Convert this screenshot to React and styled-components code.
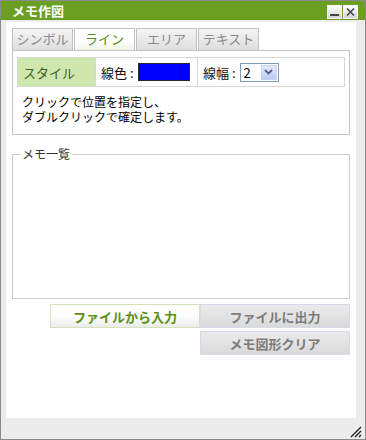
import React from "react";
import styled, { createGlobalStyle } from "styled-components";

const Global = createGlobalStyle`
  html, body { margin: 0; padding: 0; background: #ffffff; }
  body { font-family: "Noto Sans CJK JP", "Noto Sans", sans-serif; }
  * { box-sizing: border-box; }
`;

const Window = styled.div`
  width: 366px;
  height: 440px;
  border: 1px solid #8a8a8a;
  background: #ececec;
  display: flex;
  flex-direction: column;
`;

const TitleBar = styled.div`
  height: 19px;
  background: #6b9f22;
  display: flex;
  align-items: center;
  padding: 0 7px 0 11px;
`;

const Title = styled.div`
  flex: 1;
  color: #ffffff;
  font-size: 13px;
  font-weight: bold;
  line-height: 19px;
`;

const WinButtons = styled.div`
  display: flex;
  gap: 1px;
  margin-top: 3px;
`;

const WinButton = styled.div`
  width: 15px;
  height: 14px;
  border: 1px solid #f4f4f4;
  background: linear-gradient(#ffffff, #d4d4d4);
  display: flex;
  align-items: center;
  justify-content: center;
`;

const Body = styled.div`
  flex: 1;
  margin: 2px 9px 0 5px;
  background: #ffffff;
  padding: 6px 6px 0 6px;
  display: flex;
  flex-direction: column;
`;

const Tabs = styled.div`
  display: flex;
  gap: 1px;
  height: 22px;
`;

const Tab = styled.div`
  width: 61px;
  height: 22px;
  border: 1px solid #c2c2c2;
  border-bottom: none;
  background: ${(p) =>
    p.$active
      ? "linear-gradient(#ffffff 0%, #ffffff 60%, #eef5e4 100%)"
      : "linear-gradient(#f4f4f4, #dedede)"};
  color: ${(p) => (p.$active ? "#5b8c1c" : "#8a8a8a")};
  font-size: 13px;
  line-height: 20px;
  text-align: center;
`;

const Panel = styled.div`
  border: 1px solid #c4c4c4;
  height: 85px;
  padding: 6px 4px 0 4px;
`;

const StyleTable = styled.div`
  display: grid;
  grid-template-columns: 77px 102px 1fr;
  height: 30px;
  border: 1px solid #d6d6d6;
`;

const Cell = styled.div`
  display: flex;
  align-items: center;
  padding-left: 5px;
  font-size: 13px;
  color: ${(p) => (p.$head ? "#3f5f22" : "#111111")};
  background: ${(p) => (p.$head ? "#cfe7ae" : "#ffffff")};
  border-left: ${(p) => (p.$first ? "none" : "1px solid #d6d6d6")};
`;

const Label = styled.span`
  margin-right: 4px;
`;

const Swatch = styled.div`
  width: 52px;
  height: 18px;
  background: #0000ff;
  border: 1px solid #2a2a2a;
`;

const Select = styled.div`
  width: 39px;
  height: 19px;
  border: 1px solid #7f9db9;
  display: flex;
  align-items: center;
  justify-content: space-between;
  padding: 1px;
  font-size: 13px;
  color: #000;
`;

const SelectValue = styled.span`
  padding-left: 2px;
  line-height: 15px;
`;

const Arrow = styled.div`
  width: 16px;
  height: 15px;
  background: linear-gradient(#e3ebfd, #b8cbf3);
  border: 1px solid #c5d4f3;
  display: flex;
  align-items: center;
  justify-content: center;
`;

const Note = styled.div`
  padding: 7px 0 0 5px;
`;

const NoteLine = styled.div`
  height: 15px;
  font-size: 12px;
  line-height: 15px;
  color: #000;
  white-space: nowrap;
`;

const Fieldset = styled.fieldset`
  margin: 12px 0 0 0;
  padding: 0;
  height: 152px;
  border: 1px solid #cccccc;
  border-radius: 0;
`;

const Legend = styled.legend`
  margin-left: 7px;
  padding: 0 2px;
  font-size: 12px;
  color: #333;
  line-height: 14px;
`;

const ButtonGrid = styled.div`
  margin-top: 5px;
  display: grid;
  grid-template-columns: 150px 150px;
  justify-content: end;
  row-gap: 3px;
`;

const Button = styled.div`
  grid-column: ${(p) => p.$col};
  height: 24px;
  display: flex;
  align-items: center;
  justify-content: center;
  font-size: 13px;
  font-weight: bold;
  border: 1px solid ${(p) => (p.$primary ? "#d2e3b9" : "#d6dbe8")};
  background: ${(p) =>
    p.$primary
      ? "linear-gradient(#ffffff 0%, #ffffff 45%, #ececec 100%)"
      : "linear-gradient(#e9e9e9 0%, #e3e3e3 50%, #d9d9d9 100%)"};
  color: ${(p) => (p.$primary ? "#5b8f18" : "#7c7c7c")};
`;

const Footer = styled.div`
  height: 21px;
  display: flex;
  justify-content: flex-end;
  align-items: flex-end;
  padding: 0 3px 1px 0;
`;

export default function App() {
  return (
    <>
      <Global />
      <Window>
        <TitleBar>
          <Title>メモ作図</Title>
          <WinButtons>
            <WinButton>
              <svg width="11" height="10" viewBox="0 0 11 10">
                <rect x="1" y="7" width="9" height="2" fill="#444" />
              </svg>
            </WinButton>
            <WinButton>
              <svg width="11" height="10" viewBox="0 0 11 10">
                <path d="M2 1.5 L9 8.5 M9 1.5 L2 8.5" stroke="#444" strokeWidth="1.6" />
              </svg>
            </WinButton>
          </WinButtons>
        </TitleBar>
        <Body>
          <Tabs>
            <Tab>シンボル</Tab>
            <Tab $active>ライン</Tab>
            <Tab>エリア</Tab>
            <Tab>テキスト</Tab>
          </Tabs>
          <Panel>
            <StyleTable>
              <Cell $head $first>スタイル</Cell>
              <Cell>
                <Label>線色 :</Label>
                <Swatch />
              </Cell>
              <Cell>
                <Label>線幅 :</Label>
                <Select>
                  <SelectValue>2</SelectValue>
                  <Arrow>
                    <svg width="9" height="6" viewBox="0 0 9 6">
                      <path d="M1 1 L4.5 4.5 L8 1" fill="none" stroke="#4d6185" strokeWidth="1.8" />
                    </svg>
                  </Arrow>
                </Select>
              </Cell>
            </StyleTable>
            <Note>
              <NoteLine>クリックで位置を指定し、</NoteLine>
              <NoteLine>ダブルクリックで確定します。</NoteLine>
            </Note>
          </Panel>
          <Fieldset>
            <Legend>メモ一覧</Legend>
          </Fieldset>
          <ButtonGrid>
            <Button $primary $col={1}>ファイルから入力</Button>
            <Button $col={2}>ファイルに出力</Button>
            <Button $col={2}>メモ図形クリア</Button>
          </ButtonGrid>
        </Body>
        <Footer>
          <svg width="12" height="12" viewBox="0 0 12 12">
            <path d="M11 1 L1 11 M11 5 L5 11 M11 9 L9 11" stroke="#222" strokeWidth="1.4" />
          </svg>
        </Footer>
      </Window>
    </>
  );
}
